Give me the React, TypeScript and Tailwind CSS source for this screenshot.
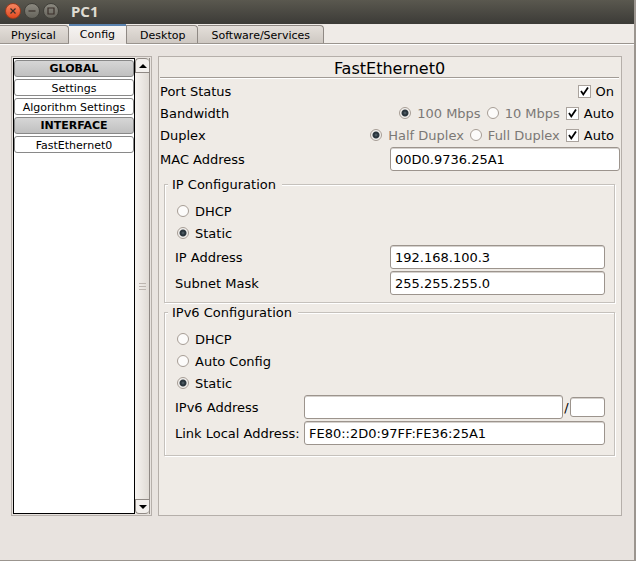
import React, { useId } from "react";
import clsx from "clsx";

const tabs = ["Physical", "Config", "Desktop", "Software/Services"];

function WindowButton({ label, close, children }: { label: string; close?: boolean; children: React.ReactNode }) {
  return (
    <button
      type="button"
      aria-label={label}
      className={clsx(
        "flex size-4 items-center justify-center rounded-full border",
        close
          ? "border-[#9c3c1e] bg-gradient-to-b from-[#f58560] to-[#e2481c]"
          : "border-[#41403a] bg-gradient-to-b from-[#8b8980] to-[#66645c]",
      )}
    >
      <svg viewBox="0 0 14 14" className="size-3.5 shrink-0" fill="none" stroke="#3a2f2a" strokeWidth="1.2">
        {children}
      </svg>
    </button>
  );
}

function TitleBar() {
  return (
    <header className="flex h-6 items-center gap-[3px] bg-gradient-to-b from-[#5a584f] to-[#3c3b37] pb-[3px] pl-[5px]">
      <WindowButton label="Close" close>
        <path d="M4.5 4.5l5 5M9.5 4.5l-5 5" />
      </WindowButton>
      <WindowButton label="Minimize">
        <path d="M3.5 7h7" />
      </WindowButton>
      <WindowButton label="Maximize">
        <path d="M4 4h6v6H4z" />
      </WindowButton>
      <h1 className="ml-[9px] font-['Noto_Sans',sans-serif] text-[15px] leading-5 font-bold text-[#dfdbd2]">PC1</h1>
    </header>
  );
}

function TabBar() {
  return (
    <nav role="tablist" className="flex h-5 items-end border-b border-[#9a948e] bg-[#efebe7] text-[11px]">
      {tabs.map((tab) => (
        <button
          key={tab}
          type="button"
          role="tab"
          aria-selected={tab === "Config"}
          className={clsx(
            "shrink-0",
            tab === "Config"
              ? "-mb-px h-5 border-t-2 border-[#5a82ae] bg-gradient-to-b from-[#f6f4f2] to-[#e9e4e0] px-[11px]"
              : "h-[18px] rounded-tr-sm border-t border-r border-[#8f8984] bg-gradient-to-b from-[#e4dfda] to-[#cec8c2] pt-0.5",
            tab === "Physical" && "pr-3 pl-[11px]",
            tab === "Desktop" && "border-l pr-3 pl-[13px]",
            tab === "Software/Services" && "pr-[13px] pl-[13px]",
          )}
        >
          {tab}
        </button>
      ))}
    </nav>
  );
}

function ListButton({ children, heading }: { children: string; heading?: boolean }) {
  return (
    <button
      type="button"
      className={clsx(
        "flex h-[17px] w-full shrink-0 items-center justify-center rounded-[3px] border border-[#898989] text-[11px] whitespace-nowrap",
        heading ? "bg-gradient-to-b from-[#d6d6d6] to-[#c0c0c0] pt-0.5 font-bold" : "bg-white pt-[3px]",
      )}
    >
      {children}
    </button>
  );
}

function ScrollBar() {
  return (
    <div className="flex w-[15px] flex-col border-r border-[#8f8984] bg-gradient-to-r from-[#f7f4f1] to-[#e0dbd5]">
      <button type="button" aria-label="Scroll up" className="flex h-[15px] items-center justify-center rounded-t-sm border border-r-0 border-[#8f8984] bg-[#f3f0ed]">
        <svg viewBox="0 0 8 4" className="h-1 w-2">
          <path d="M0 4L4 0l4 4z" />
        </svg>
      </button>
      <div className="flex flex-1 flex-col items-center justify-center gap-0.5">
        <i className="h-px w-[7px] bg-[#bdb6b0]" />
        <i className="h-px w-[7px] bg-[#bdb6b0]" />
        <i className="h-px w-[7px] bg-[#bdb6b0]" />
      </div>
      <button type="button" aria-label="Scroll down" className="flex h-[15px] items-center justify-center rounded-b-sm border border-r-0 border-[#8f8984] bg-[#f3f0ed]">
        <svg viewBox="0 0 8 4" className="h-1 w-2">
          <path d="M0 0l4 4 4-4z" />
        </svg>
      </button>
    </div>
  );
}

function Sidebar() {
  return (
    <aside className="flex w-[141px] shrink-0 border border-[#b5afaa] p-px">
      <div className="flex flex-1 flex-col gap-0.5 border border-black bg-white pt-px">
        <ListButton heading>GLOBAL</ListButton>
        <ListButton>Settings</ListButton>
        <ListButton>Algorithm Settings</ListButton>
        <ListButton heading>INTERFACE</ListButton>
        <ListButton>FastEthernet0</ListButton>
      </div>
      <ScrollBar />
    </aside>
  );
}

function Radio({ name, label, checked, disabled }: { name: string; label: string; checked?: boolean; disabled?: boolean }) {
  return (
    <label className={clsx("flex h-[22px] items-center gap-1.5", disabled && "text-[#7b7875]")}>
      <input
        type="radio"
        name={name}
        defaultChecked={checked}
        disabled={disabled}
        className="size-3 appearance-none rounded-full border border-[#a69d95] bg-[#fcfbfa] checked:bg-[radial-gradient(circle,#5d6a72_0px,#27333b_2px,#2f3940_3px,#f4f1ee_4px)]"
      />
      <span className="pt-0.5">{label}</span>
    </label>
  );
}

function Check({ label }: { label: string }) {
  return (
    <label className="flex h-[22px] items-center gap-[5px]">
      <span className="grid size-[13px]">
        <input
          type="checkbox"
          defaultChecked
          className="peer col-start-1 row-start-1 size-[13px] appearance-none border border-[#aaa39d] bg-white"
        />
        <svg
          viewBox="0 0 13 13"
          className="pointer-events-none invisible col-start-1 row-start-1 size-[13px] peer-checked:visible"
          fill="none"
          stroke="#000"
          strokeWidth="1.8"
        >
          <path d="M3 6l2.3 3.4L10 2.6" />
        </svg>
      </span>
      <span className="pt-0.5">{label}</span>
    </label>
  );
}

function PortRow({ title, children }: { title: string; children: React.ReactNode }) {
  return (
    <div className="flex h-[22px] items-center justify-between pr-1.5">
      <span className="pt-0.5">{title}</span>
      <div className="flex gap-1.5">{children}</div>
    </div>
  );
}

const boxStyle =
  "w-full min-w-0 rounded-[3px] border border-[#9c948d] bg-white px-1 shadow-[inset_0_1px_0_#d5d1cd] outline-none";

function Field({ label, value, className }: { label: string; value: string; className: string }) {
  const id = useId();
  return (
    <div className={clsx("grid items-center", className)}>
      <label htmlFor={id} className="pt-0.5 whitespace-nowrap">
        {label}
      </label>
      <input id={id} defaultValue={value} className={clsx(boxStyle, "h-6")} />
    </div>
  );
}

function Group({ title, className, children }: { title: string; className: string; children: React.ReactNode }) {
  return (
    <fieldset
      className={clsx(
        "mr-[5px] ml-1 min-w-0 border border-[#c5c1bc] pt-2 pr-[9px] pl-2.5 shadow-[inset_1px_1px_0_#fff,1px_1px_0_#fff]",
        className,
      )}
    >
      <legend className="-ml-[7px] h-4 bg-[#efebe6] pr-1.5 pl-1 leading-[18px]">{title}</legend>
      {children}
    </fieldset>
  );
}

function InterfacePanel() {
  return (
    <main className="min-w-0 flex-1 border border-[#b5afaa] bg-[#efebe6] p-px text-[13px]">
      <h2 className="mr-px mb-0.5 h-5 border-b border-[#a19b95] text-center text-base leading-[22px] shadow-[0_1px_0_#fff]">
        FastEthernet0
      </h2>
      <PortRow title="Port Status">
        <Check label="On" />
      </PortRow>
      <PortRow title="Bandwidth">
        <Radio name="bandwidth" label="100 Mbps" checked disabled />
        <Radio name="bandwidth" label="10 Mbps" disabled />
        <Check label="Auto" />
      </PortRow>
      <PortRow title="Duplex">
        <Radio name="duplex" label="Half Duplex" checked disabled />
        <Radio name="duplex" label="Full Duplex" disabled />
        <Check label="Auto" />
      </PortRow>
      <Field label="MAC Address" value="00D0.9736.25A1" className="mt-px mb-[5px] grid-cols-2" />

      <Group title="IP Configuration" className="mb-px pb-[7px]">
        <div className="mb-px pl-0.5">
          <Radio name="ipv4" label="DHCP" />
          <Radio name="ipv4" label="Static" checked />
        </div>
        <Field label="IP Address" value="192.168.100.3" className="mb-0.5 grid-cols-2" />
        <Field label="Subnet Mask" value="255.255.255.0" className="grid-cols-2" />
      </Group>

      <Group title="IPv6 Configuration" className="pb-2.5">
        <div className="mb-px pl-0.5">
          <Radio name="ipv6" label="DHCP" />
          <Radio name="ipv6" label="Auto Config" />
          <Radio name="ipv6" label="Static" checked />
        </div>
        <div className="mb-0.5 grid grid-cols-[129px_1fr] items-center">
          <label htmlFor="ipv6-address" className="pt-0.5">
            IPv6 Address
          </label>
          <div className="flex items-center">
            <input id="ipv6-address" className={clsx(boxStyle, "h-6 flex-1")} />
            <span className="w-[7px] pt-0.5 text-center">/</span>
            <div className="flex w-[35px]">
              <input aria-label="Prefix length" className={clsx(boxStyle, "h-5")} />
            </div>
          </div>
        </div>
        <Field label="Link Local Address:" value="FE80::2D0:97FF:FE36:25A1" className="grid-cols-[129px_1fr]" />
      </Group>
    </main>
  );
}

export default function App() {
  return (
    <div className="flex min-h-screen flex-col border-r-2 border-b border-[#9b958f] bg-[#e8e3df] font-['DejaVu_Sans',Verdana,sans-serif] text-black">
      <TitleBar />
      <TabBar />
      <div className="flex flex-1 gap-1.5 border-t border-white pt-[11px] pr-3 pb-11 pl-[11px]">
        <Sidebar />
        <InterfacePanel />
      </div>
    </div>
  );
}
